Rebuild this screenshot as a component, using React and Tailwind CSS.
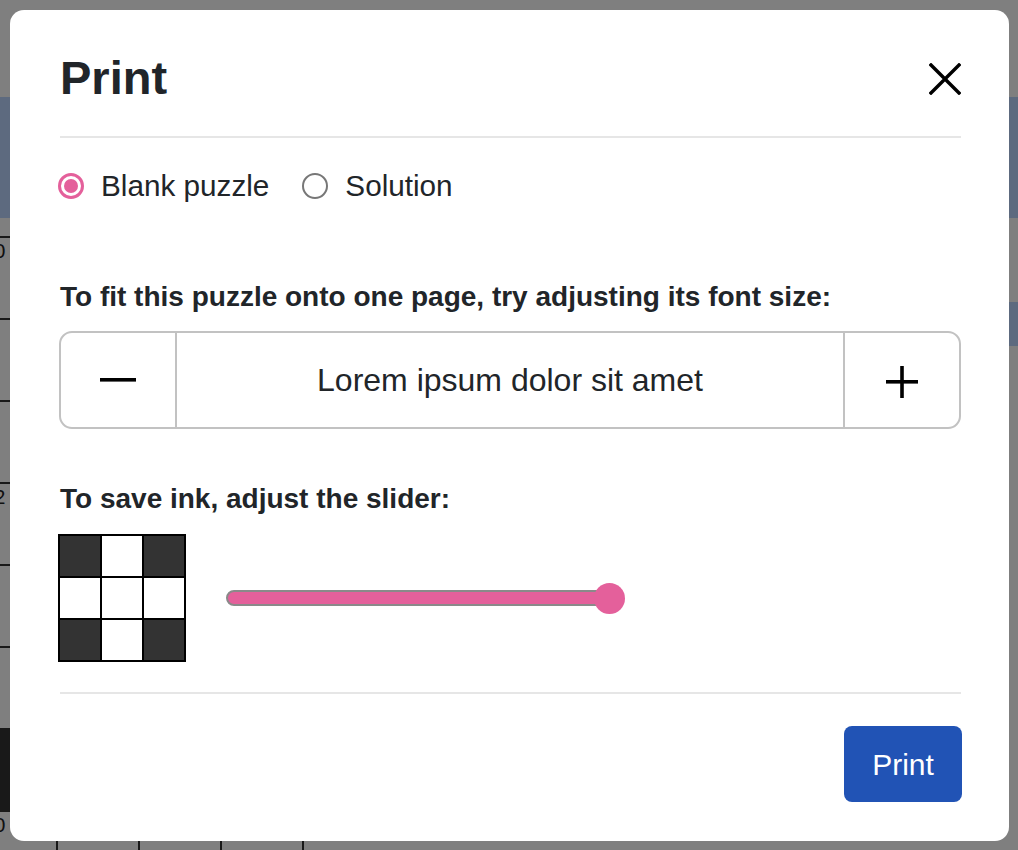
import React from "react";

function CloseIcon() {
  return (
    <svg width="32" height="32" viewBox="0 0 32 32" className="block">
      <path d="M2 2 L30 30 M30 2 L2 30" stroke="#000" strokeWidth="3.4" strokeLinecap="square" fill="none" />
    </svg>
  );
}

function MinusIcon() {
  return (
    <svg width="36" height="4" viewBox="0 0 36 4" className="block">
      <rect x="0" y="0" width="36" height="3.6" fill="#000" />
    </svg>
  );
}

function PlusIcon() {
  return (
    <svg width="32" height="32" viewBox="0 0 32 32" className="block">
      <rect x="0" y="14" width="32" height="3.6" fill="#000" />
      <rect x="14.2" y="0" width="3.6" height="32" fill="#000" />
    </svg>
  );
}

function BackgroundGrid() {
  const cells = [];
  for (let r = 0; r < 8; r++) {
    for (let c = 0; c < 4; c++) {
      const dark = r === 6 && c === 0;
      let num = null;
      if (c === 0 && r === 0) num = "10";
      if (c === 0 && r === 3) num = "12";
      if (c === 0 && r === 7) num = "20";
      cells.push(
        <div
          key={`${r}-${c}`}
          className={`relative w-[82px] h-[82px] border-t-2 border-r-2 border-[#333] ${dark ? "bg-[#333]" : "bg-white"}`}
        >
          {num && (
            <span className="absolute left-[6px] top-[2px] text-[21px] leading-none text-[#222]">{num}</span>
          )}
        </div>
      );
    }
  }
  return <div className="ml-[-24px] grid grid-cols-[repeat(4,82px)]">{cells}</div>;
}

export default function App() {
  return (
    <div className="relative w-[1018px] h-[850px] overflow-hidden bg-white font-['Liberation_Sans',Arial,sans-serif] text-[#212529]">
      {/* underlying page */}
      <div className="h-[97px]" />
      <div className="h-[121px] bg-[#bad4ff]" />
      <div className="mt-[18px] flex">
        <BackgroundGrid />
        <div className="flex-1 pt-[66px]">
          <div className="h-[44px] bg-[#bad4ff]" />
        </div>
      </div>

      {/* overlay */}
      <div className="absolute inset-0 bg-black/50" />

      {/* modal */}
      <div className="absolute left-[10px] top-[10px] w-[999px] h-[831px] rounded-[14px] bg-white pl-[50px] pr-[48px] flex flex-col">
        <div className="pt-[40px] pb-[31px] flex items-center justify-between border-b-2 border-[#e6e6e6]">
          <h1 className="text-[47px] leading-[55px] font-bold">Print</h1>
          <button className="mt-[3px]" aria-label="Close">
            <CloseIcon />
          </button>
        </div>

        <div className="mt-[26px] h-[44px] flex items-center text-[29.7px]">
          <label className="flex items-center ml-[-2px]">
            <span className="w-[26px] h-[26px] rounded-full border-[3px] border-[#e4609b] flex items-center justify-center">
              <span className="w-[14px] h-[14px] rounded-full bg-[#e4609b]" />
            </span>
            <span className="ml-[17px]">Blank puzzle</span>
          </label>
          <label className="flex items-center ml-[33px]">
            <span className="w-[26px] h-[26px] rounded-full border-2 border-[#777]" />
            <span className="ml-[17px]">Solution</span>
          </label>
        </div>

        <div className="mt-[68px] text-[28px] leading-[42px] font-bold">
          To fit this puzzle onto one page, try adjusting its font size:
        </div>

        <div className="mt-[13px] ml-[-1px] h-[98px] flex rounded-[13px] border-2 border-[#c2c2c2]">
          <button className="w-[116px] flex items-center justify-center border-r-2 border-[#c2c2c2]">
            <MinusIcon />
          </button>
          <div className="flex-1 flex items-center justify-center text-[32px]">Lorem ipsum dolor sit amet</div>
          <button className="w-[116px] flex items-center justify-center border-l-2 border-[#c2c2c2] pt-[4px]">
            <PlusIcon />
          </button>
        </div>

        <div className="mt-[49px] text-[28px] leading-[42px] font-bold">To save ink, adjust the slider:</div>

        <div className="mt-[14px] flex items-center">
          <div className="ml-[-2px] w-[128px] h-[128px] bg-black p-[2px] grid grid-cols-3 gap-[2px]">
            <div className="bg-[#333]" />
            <div className="bg-white" />
            <div className="bg-[#333]" />
            <div className="bg-white" />
            <div className="bg-white" />
            <div className="bg-white" />
            <div className="bg-[#333]" />
            <div className="bg-white" />
            <div className="bg-[#333]" />
          </div>
          <div className="relative ml-[40px] w-[399px] h-[32px] flex items-center">
            <div className="w-[396px] h-[16px] rounded-full bg-[#e4609b] border-2 border-[#8a8a8a]" />
            <div className="absolute right-0 top-[0.5px] w-[31px] h-[31px] rounded-full bg-[#e4609b]" />
          </div>
        </div>

        <div className="mt-[30px] border-b-2 border-[#e6e6e6]" />

        <div className="mt-[32px] flex justify-end">
          <button className="mr-[-1px] w-[118px] h-[76px] rounded-[8px] bg-[#2153b5] text-white text-[30px]">
            Print
          </button>
        </div>
      </div>
    </div>
  );
}
